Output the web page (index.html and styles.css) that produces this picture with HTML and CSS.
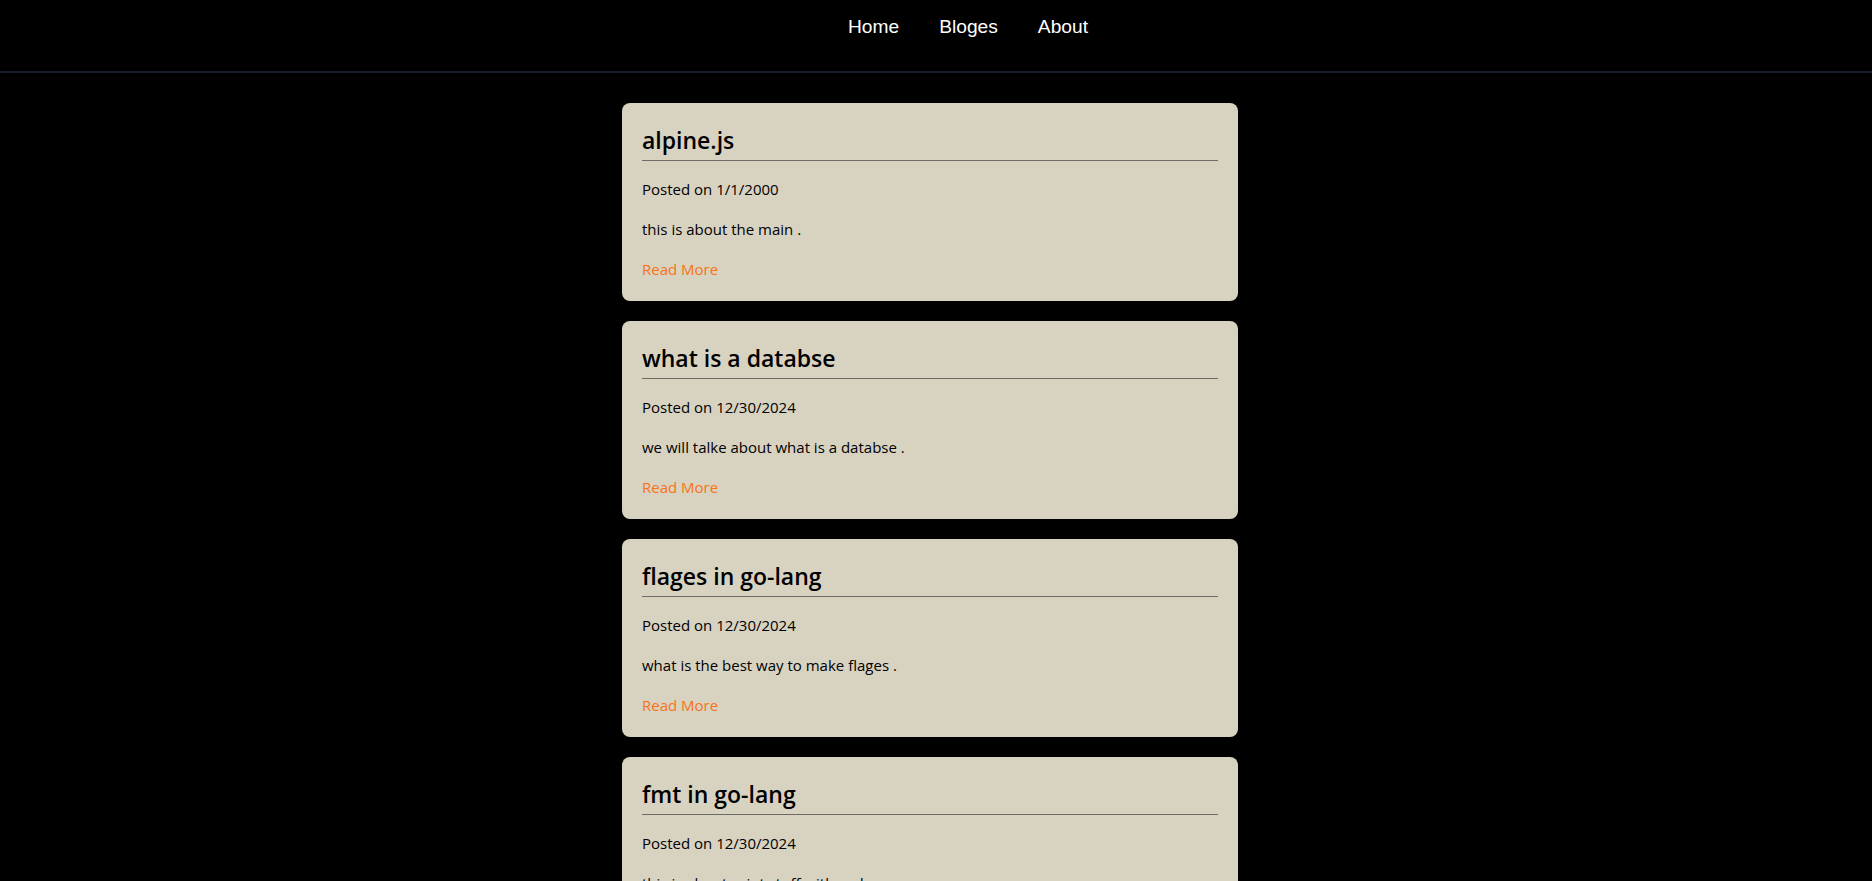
FILE: index.html
```html
<!DOCTYPE html>
<html lang="en">
<head>
<meta charset="utf-8">
<title>Bloges</title>
<link rel="stylesheet" href="styles.css">
</head>
<body>
<header class="site-header">
  <nav class="nav">
    <a class="nav-link" href="#">Home</a>
    <a class="nav-link" href="#">Bloges</a>
    <a class="nav-link" href="#">About</a>
  </nav>
</header>
<main class="posts">
  <article class="card">
    <h2 class="card-title">alpine.js</h2>
    <p class="card-date">Posted on 1/1/2000</p>
    <p class="card-text">this is about the main .</p>
    <a class="card-link" href="#">Read More</a>
  </article>
  <article class="card">
    <h2 class="card-title">what is a databse</h2>
    <p class="card-date">Posted on 12/30/2024</p>
    <p class="card-text">we will talke about what is a databse .</p>
    <a class="card-link" href="#">Read More</a>
  </article>
  <article class="card">
    <h2 class="card-title">flages in go-lang</h2>
    <p class="card-date">Posted on 12/30/2024</p>
    <p class="card-text">what is the best way to make flages .</p>
    <a class="card-link" href="#">Read More</a>
  </article>
  <article class="card">
    <h2 class="card-title">fmt in go-lang</h2>
    <p class="card-date">Posted on 12/30/2024</p>
    <p class="card-text">this is about print stuff with code .</p>
    <a class="card-link" href="#">Read More</a>
  </article>
</main>
</body>
</html>
```
FILE: styles.css
```css
html, body {
  margin: 0;
  padding: 0;
  background: #000;
}
body {
  font-family: "Open Sans", "Noto Sans", sans-serif;
  color: #000;
  overflow-x: hidden;
}
.site-header {
  height: 73px;
  border-bottom: 2px solid #161c2c;
  box-sizing: border-box;
  display: flex;
  justify-content: center;
  padding-left: 64px;
}
.nav {
  display: flex;
  gap: 40px;
  padding-top: 17px;
}
.nav-link {
  font-family: "Liberation Sans", Arial, sans-serif;
  font-size: 19.2px;
  color: #fff;
  text-decoration: none;
  line-height: 20px;
}
.posts {
  display: flex;
  flex-direction: column;
  align-items: center;
  gap: 20px;
  padding: 30px 12px 40px 0;
}
.card {
  width: 616px;
  box-sizing: border-box;
  background: #d8d2c1;
  border-radius: 8px;
  padding: 20px 20px 20px;
  display: flex;
  flex-direction: column;
}
.card-title {
  margin: 0;
  font-size: 23px;
  font-weight: 600;
  line-height: 30px;
  padding: 2px 0 5px;
  border-bottom: 1px solid #6e6b66;
}
.card-date,
.card-text {
  margin: 16px 0 0;
  font-size: 15px;
  line-height: 24px;
}
.card-link {
  margin-top: 16px;
  font-size: 15px;
  line-height: 24px;
  color: #f97316;
  text-decoration: none;
  align-self: flex-start;
}
```
